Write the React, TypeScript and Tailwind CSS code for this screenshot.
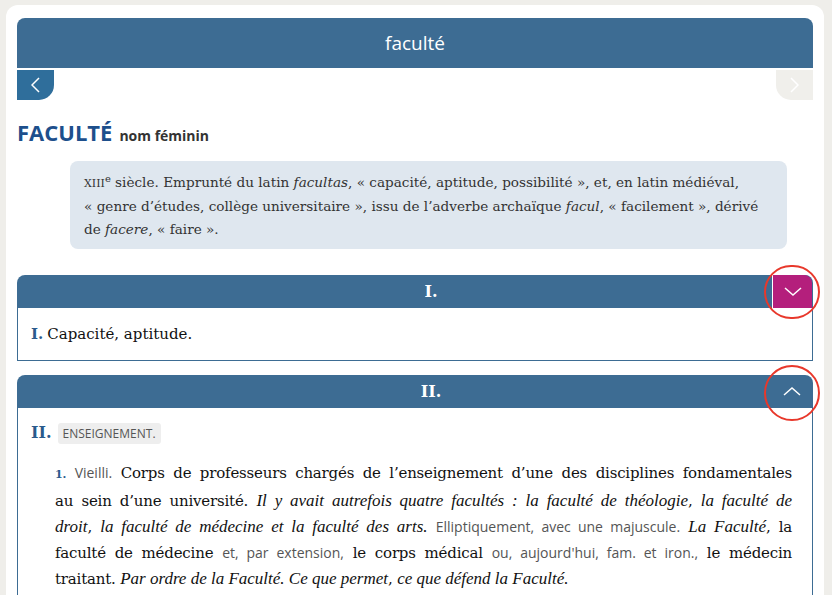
import React from "react";

const serif = "font-['DejaVu_Serif',serif]";
const ital = "font-['Liberation_Serif',serif] italic text-[17px] tracking-normal";
const sans = "font-['Open_Sans',sans-serif]";

function Chevron({ dir, className }: { dir: "up" | "down" | "left" | "right"; className?: string }) {
  const pts: Record<string, string> = {
    down: "1,1 9,8 17,1",
    up: "1,8 9,1 17,8",
    left: "8,1 1,8 8,15",
    right: "1,1 8,8 1,15",
  };
  const vert = dir === "up" || dir === "down";
  return (
    <svg
      width={vert ? 18 : 9}
      height={vert ? 9 : 16}
      viewBox={vert ? "0 0 18 9" : "0 0 9 16"}
      className={className}
    >
      <polyline points={pts[dir]} fill="none" stroke="currentColor" strokeWidth="1.5" />
    </svg>
  );
}

function Gloss({ children }: { children: React.ReactNode }) {
  return <span className={`${sans} text-[14px] tracking-normal text-[#555]`}>{children}</span>;
}

function I({ children }: { children: React.ReactNode }) {
  return <span className={ital}>{children}</span>;
}

function Line({ children, last }: { children: React.ReactNode; last?: boolean }) {
  return (
    <div className={last ? "whitespace-nowrap" : "text-justify [text-align-last:justify]"}>
      {children}
    </div>
  );
}

export default function App() {
  return (
    <div className="min-h-screen w-[832px] bg-[#efeeea] pt-[5px] overflow-hidden">
      <div className="ml-[6px] mr-[8px] h-[600px] rounded-t-[12px] bg-white px-[11px] pt-[13px]">
        {/* headword bar */}
        <div className={`${sans} flex h-[50px] items-center justify-center rounded-t-[8px] bg-[#3d6c93] text-[19px] text-white`}>
          faculté
        </div>
        <div className="mt-[2px] flex h-[30px] justify-between">
          <div className="flex w-[37px] items-center justify-center rounded-br-[15px] bg-[#2f6e9b] text-white">
            <Chevron dir="left" />
          </div>
          <div className="flex w-[37px] items-center justify-center rounded-bl-[15px] bg-[#f0efeb] text-white">
            <Chevron dir="right" />
          </div>
        </div>

        {/* title */}
        <div className={`${sans} mt-[17px] flex items-baseline gap-[7px] leading-[30px]`}>
          <span className="text-[22px] font-bold text-[#1d4f8c]">FACULTÉ</span>
          <span className="text-[14px] font-bold text-[#333]">nom féminin</span>
        </div>

        {/* etymology */}
        <div className={`${serif} ml-[53px] mr-[26px] mt-[10px] rounded-[8px] bg-[#dfe7ef] pb-[8px] pl-[14px] pt-[10px] text-[13.6px] leading-[23px] text-[#333]`}>
          <div className="whitespace-nowrap">
            <span className="text-[11px]">XIII</span>
            <sup className="text-[10px]">e</sup> siècle. Emprunté du latin <i>facultas</i>, « capacité, aptitude,
            possibilité », et, en latin médiéval,
          </div>
          <div className="whitespace-nowrap">
            « genre d’études, collège universitaire », issu de l’adverbe archaïque <i>facul</i>, « facilement »,
            dérivé
          </div>
          <div className="whitespace-nowrap">
            de <i>facere</i>, « faire ».
          </div>
        </div>

        {/* section I */}
        <div className="mt-[26px]">
          <div className="relative flex h-[33px] items-center justify-center rounded-t-[8px] bg-[#3d6c93]">
            <span className={`${serif} pl-[32px] text-[16px] font-bold text-white`}>I.</span>
            <div className="absolute right-[1px] top-0 flex h-[33px] w-[40px] items-center justify-center rounded-tr-[8px] border-l border-white bg-[#b41f7c] text-white">
              <Chevron dir="down" />
            </div>
            <div className="absolute right-[-7px] top-[-10px] h-[54px] w-[56px] rounded-full border-2 border-[#e8382b]" />
          </div>
          <div className={`${serif} flex h-[53px] items-center border-x border-b border-[#3d6c93] pl-[13px] text-[15px] text-[#111]`}>
            <span className="font-bold text-[#2a5a8c]">I.</span>
            <span className="ml-[4px]">Capacité, aptitude.</span>
          </div>
        </div>

        {/* section II */}
        <div className="mt-[14px]">
          <div className="relative flex h-[33px] items-center justify-center rounded-t-[8px] bg-[#3d6c93]">
            <span className={`${serif} pl-[32px] text-[16px] font-bold text-white`}>II.</span>
            <div className="absolute right-[1px] top-0 flex h-[33px] w-[40px] items-center justify-center text-white">
              <Chevron dir="up" />
            </div>
            <div className="absolute right-[-7px] top-[-10px] h-[56px] w-[56px] rounded-full border-2 border-[#e8382b]" />
          </div>
          <div className="h-[200px] border-x border-[#3d6c93] pl-[13px] pt-[14px]">
            <div className="flex h-[22px] items-center gap-[6px]">
              <span className={`${serif} text-[16px] font-bold text-[#2a5a8c]`}>II.</span>
              <span className={`${sans} rounded-[3px] bg-[#eeeeee] px-[5px] text-[12px] leading-[21px] text-[#555]`}>
                ENSEIGNEMENT.
              </span>
            </div>
            <div className={`${serif} ml-[24px] mr-[20px] mt-[16px] text-[15px] leading-[26px] tracking-[-0.2px] text-[#111]`}>
              <Line>
                <span className="text-[11px] font-bold text-[#2a5a8c]">1.</span> <Gloss>Vieilli.</Gloss> Corps de
                professeurs chargés de l’enseignement d’une des disciplines fondamentales
              </Line>
              <Line>
                au sein d’une université. <I>Il y avait autrefois quatre facultés : la faculté de théologie</I>,{" "}
                <I>la faculté de</I>
              </Line>
              <Line>
                <I>droit</I>, <I>la faculté de médecine et la faculté des arts.</I>{" "}
                <Gloss>Elliptiquement, avec une majuscule.</Gloss> <I>La Faculté</I>, la
              </Line>
              <Line>
                faculté de médecine <Gloss>et, par extension,</Gloss> le corps médical{" "}
                <Gloss>ou, aujourd'hui, fam. et iron.,</Gloss> le médecin
              </Line>
              <Line last>
                traitant. <I>Par ordre de la Faculté. Ce que permet</I>, <I>ce que défend la Faculté.</I>
              </Line>
            </div>
          </div>
        </div>
      </div>
    </div>
  );
}
